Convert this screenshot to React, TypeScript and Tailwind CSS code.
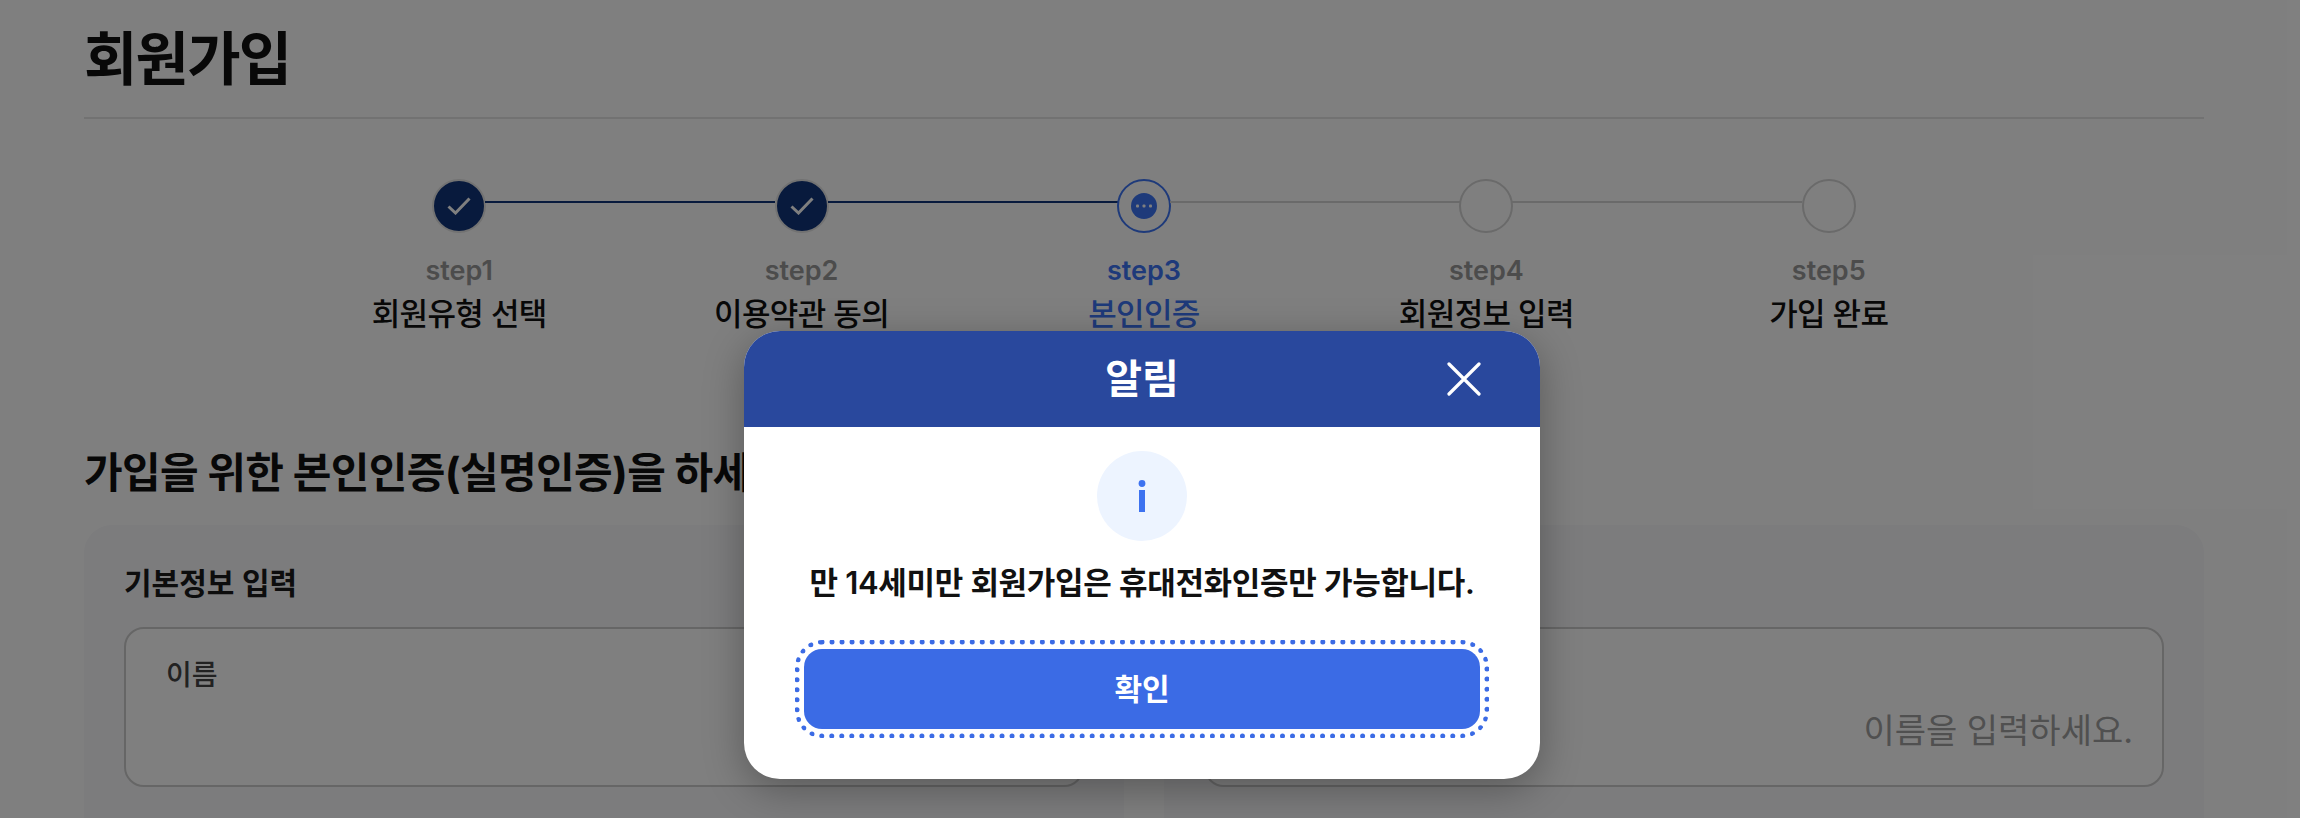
import React from "react";

const steps = [
  { n: "step1", label: "회원유형 선택", state: "done" },
  { n: "step2", label: "이용약관 동의", state: "done" },
  { n: "step3", label: "본인인증", state: "active" },
  { n: "step4", label: "회원정보 입력", state: "todo" },
  { n: "step5", label: "가입 완료", state: "todo" },
];

function Circle({ state }: { state: string }) {
  if (state === "done") {
    return (
      <div className="w-[54px] h-[54px] rounded-full bg-[#10347a] border-2 border-[#e4e4e4] flex items-center justify-center">
        <svg width="24" height="18" viewBox="0 0 24 18" fill="none">
          <path d="M1.5 9.5 L8.5 16 L22.5 1.5" stroke="#ffffff" strokeWidth="3" />
        </svg>
      </div>
    );
  }
  if (state === "active") {
    return (
      <div className="w-[54px] h-[54px] rounded-full bg-white border-2 border-[#3c74f5] flex items-center justify-center">
        <div className="w-[26px] h-[26px] rounded-full bg-[#3c74f5] flex items-center justify-center">
          <svg width="18" height="4" viewBox="0 0 18 4" fill="#ffffff">
            <rect x="1" y="0.5" width="3" height="3" rx="1" />
            <rect x="7.5" y="0.5" width="3" height="3" rx="1" />
            <rect x="14" y="0.5" width="3" height="3" rx="1" />
          </svg>
        </div>
      </div>
    );
  }
  return <div className="w-[54px] h-[54px] rounded-full bg-white border-2 border-[#d4d4d4]" />;
}

function Field({ placeholder }: { placeholder: string }) {
  return (
    <div className="h-[160px] rounded-[20px] border-2 border-[#cccccc] bg-white pt-[28px] px-[40px] flex flex-col">
      <div className="text-[28px] leading-[36px] text-[#444444] font-medium">이름</div>
      <div className="mt-[15px] -mr-[11px] text-right text-[34px] leading-[46px] text-[#a0a0a0]">{placeholder}</div>
    </div>
  );
}

function Panel({ title }: { title: string }) {
  return (
    <div className="h-[400px] rounded-[28px] bg-[#f8f8fb] px-[40px] pt-[37px]">
      <h3 className="text-[30px] leading-[42px] font-semibold text-[#1a1a1a] mb-[23px]">{title}</h3>
      <Field placeholder="이름을 입력하세요." />
    </div>
  );
}

export default function App() {
  return (
    <div className="relative h-[818px] w-[2300px] overflow-hidden bg-white [font-family:Inter,'Noto_Sans_CJK_KR',sans-serif]">
      <div className="w-[2288px] px-[84px]">
        <h1 className="h-[119px] pt-[2px] flex items-center border-b-2 border-[#e4e4e4] text-[58px] font-semibold tracking-[-0.03em] text-[#111111]">
          회원가입
        </h1>

        <div className="mx-auto mt-[60px] flex w-[1712px]">
          {steps.map((s, i) => (
            <div key={s.n} className="relative flex w-[342.4px] flex-col items-center">
              {i < steps.length - 1 && (
                <div
                  className={
                    "absolute left-[calc(50%+26px)] top-[22px] h-[2px] w-[290px] " +
                    (s.state === "done" ? "bg-[#10347a]" : "bg-[#d4d4d4]")
                  }
                />
              )}
              <Circle state={s.state} />
              <div
                className={
                  "mt-[20px] text-[27px] leading-[36px] font-semibold " +
                  (s.state === "active" ? "text-[#3c74f5]" : "text-[#999999]")
                }
              >
                {s.n}
              </div>
              <div
                className={
                  "mt-[5px] text-[31px] leading-[40px] font-medium tracking-[-0.02em] " +
                  (s.state === "active" ? "text-[#3c74f5]" : "text-[#111111]")
                }
              >
                {s.label}
              </div>
            </div>
          ))}
        </div>

        <h2 className="mt-[111px] text-[42px] leading-[56px] font-bold tracking-[-0.015em] text-[#111111]">
          가입을 위한 본인인증(실명인증)을 하세요
        </h2>

        <div className="mt-[24px] grid grid-cols-2 gap-[40px]">
          <Panel title="기본정보 입력" />
          <Panel title="기본정보 입력" />
        </div>
      </div>

      <div className="absolute inset-0 bg-black/50" />

      <div className="absolute left-[744px] top-[331px] h-[448px] w-[796px] overflow-hidden rounded-[36px] bg-white shadow-[0_10px_40px_rgba(0,0,0,0.3)]">
        <div className="relative flex h-[96px] items-center justify-center bg-[#29489d]">
          <div className="text-[40px] font-bold text-white">알림</div>
          <button className="absolute right-[59px] top-[31px]">
            <svg width="34" height="34" viewBox="0 0 34 34" fill="none" stroke="#ffffff" strokeWidth="3.2" strokeLinecap="round">
              <path d="M2 2 L32 32 M32 2 L2 32" />
            </svg>
          </button>
        </div>
        <div className="flex flex-col items-center pt-[24px]">
          <div className="flex h-[90px] w-[90px] items-center justify-center rounded-full bg-[#edf4ff]">
            <svg width="8" height="32" viewBox="0 0 8 32" fill="#3d72f0">
              <circle cx="4" cy="3.5" r="3.4" />
              <rect x="1" y="10" width="6" height="22" />
            </svg>
          </div>
          <p className="mt-[22px] text-[31px] leading-[40px] font-semibold tracking-[-0.01em] text-[#111111]">
            만 14세미만 회원가입은 휴대전화인증만 가능합니다.
          </p>
          <button className="mt-[46px] flex h-[80px] w-[676px] items-center justify-center rounded-[18px] bg-[#3b6be5] text-[30px] font-semibold text-white outline-[5px] outline-dotted outline-offset-[4px] outline-[#3b6be5]">
            확인
          </button>
        </div>
      </div>
    </div>
  );
}
